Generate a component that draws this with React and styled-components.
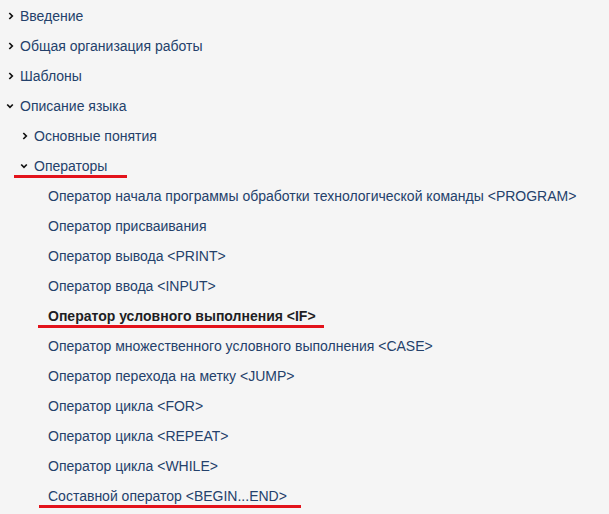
import { createGlobalStyle } from "styled-components";
import styled from "styled-components";

const GlobalStyle = createGlobalStyle`
  html, body {
    margin: 0;
    padding: 0;
    background: #f5f5f5;
  }
  body {
    font-family: "Liberation Sans", Arial, sans-serif;
    font-size: 14px;
  }
`;

const STree = styled.ul`
  list-style: none;
  margin: 0;
  padding: 1px 0 0;
  width: 609px;
  height: 513px;
  background: #f5f5f5;
`;

const SRow = styled.li`
  display: flex;
  align-items: center;
  height: 30px;
  padding-left: ${({ $level }) => 6 + $level * 14}px;
`;

const SToggle = styled.span`
  display: flex;
  align-items: center;
  justify-content: flex-start;
  width: 14px;
  height: 30px;
  padding-left: ${({ $open }) => ($open ? 0 : 1)}px;
  box-sizing: border-box;
`;

const SLabel = styled.span`
  position: relative;
  color: ${({ $bold }) => ($bold ? "#1e1e24" : "#24416b")};
  font-weight: ${({ $bold }) => ($bold ? 700 : 400)};
  line-height: 30px;
  white-space: nowrap;

  ${({ $mark }) =>
    $mark &&
    `
    &::after {
      content: "";
      position: absolute;
      left: -${$mark[0]}px;
      right: -${$mark[1]}px;
      top: 24px;
      height: 3px;
      background: #e3131b;
    }
  `}
`;

const Chevron = ({ open }) =>
  open ? (
    <svg width="8" height="8" viewBox="0 0 8 8">
      <polyline points="1.2,2.5 4,5.3 6.8,2.5" fill="none" stroke="#111" strokeWidth="1.7" />
    </svg>
  ) : (
    <svg width="8" height="8" viewBox="0 0 8 8">
      <polyline points="2.3,1 5.3,4 2.3,7" fill="none" stroke="#111" strokeWidth="1.7" />
    </svg>
  );

const items = [
  { label: "Введение", level: 0, toggle: "closed" },
  { label: "Общая организация работы", level: 0, toggle: "closed" },
  { label: "Шаблоны", level: 0, toggle: "closed" },
  { label: "Описание языка", level: 0, toggle: "open" },
  { label: "Основные понятия", level: 1, toggle: "closed" },
  { label: "Операторы", level: 1, toggle: "open", mark: [20, 20] },
  { label: "Оператор начала программы обработки технологической команды <PROGRAM>", level: 2 },
  { label: "Оператор присваивания", level: 2 },
  { label: "Оператор вывода <PRINT>", level: 2 },
  { label: "Оператор ввода <INPUT>", level: 2 },
  { label: "Оператор условного выполнения <IF>", level: 2, bold: true, mark: [10, 8] },
  { label: "Оператор множественного условного выполнения <CASE>", level: 2 },
  { label: "Оператор перехода на метку <JUMP>", level: 2 },
  { label: "Оператор цикла <FOR>", level: 2 },
  { label: "Оператор цикла <REPEAT>", level: 2 },
  { label: "Оператор цикла <WHILE>", level: 2 },
  { label: "Составной оператор <BEGIN...END>", level: 2, mark: [9, 14] },
];

const App = () => (
  <>
    <GlobalStyle />
    <STree>
      {items.map(({ label, level, toggle, bold, mark }) => (
        <SRow key={label} $level={level}>
          <SToggle $open={toggle === "open"}>
            {toggle && <Chevron open={toggle === "open"} />}
          </SToggle>
          <SLabel $bold={bold} $mark={mark}>
            {label}
          </SLabel>
        </SRow>
      ))}
    </STree>
  </>
);

export default App;
